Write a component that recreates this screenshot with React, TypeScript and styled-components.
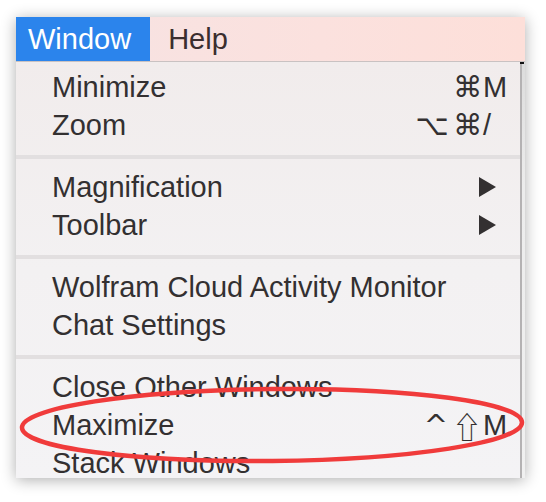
import React from "react";
import styled, { createGlobalStyle } from "styled-components";

const GlobalStyle = createGlobalStyle`
  html, body {
    margin: 0;
    padding: 0;
    background: #fff;
  }
  body {
    font-family: "Liberation Sans", Arial, sans-serif;
  }
`;

type Shortcut = { mods: string; key: string };
type Item = { label: string; shortcut?: Shortcut; submenu?: boolean };

const sections: Item[][] = [
  [
    { label: "Minimize", shortcut: { mods: "⌘", key: "M" } },
    { label: "Zoom", shortcut: { mods: "⌥⌘", key: "/" } },
  ],
  [
    { label: "Magnification", submenu: true },
    { label: "Toolbar", submenu: true },
  ],
  [{ label: "Wolfram Cloud Activity Monitor" }, { label: "Chat Settings" }],
  [
    { label: "Close Other Windows" },
    { label: "Maximize", shortcut: { mods: "^⇧", key: "M" } },
    { label: "Stack Windows" },
  ],
];

const Stage = styled.div`
  position: relative;
  width: 546px;
  height: 502px;
  padding: 17px 0 0 16px;
  box-sizing: border-box;
  overflow: hidden;
`;

const Frame = styled.div`
  width: 509px;
  height: 461px;
  overflow: hidden;
  display: flex;
  flex-direction: column;
  box-shadow: 0 2px 14px rgba(0, 0, 0, 0.32);
`;

const MenuBar = styled.div`
  height: 44px;
  display: flex;
  align-items: stretch;
  background: linear-gradient(90deg, #f6e3e3 0%, #fbe1de 60%, #fddfd9 100%);
  border-bottom: 1px solid #c9c2c2;
  flex-shrink: 0;
`;

const BarItem = styled.div<{ $active?: boolean }>`
  display: flex;
  align-items: center;
  font-size: 29px;
  padding: ${(p) => (p.$active ? "0 19px 0 12px" : "0 0 0 18px")};
  background: ${(p) => (p.$active ? "#2b84ec" : "transparent")};
  color: ${(p) => (p.$active ? "#fff" : "#3b2e2e")};
`;

const Body = styled.div`
  flex: 1;
  display: flex;
  min-height: 0;
`;

const Menu = styled.div`
  flex: 1;
  padding-top: 6px;
  background: linear-gradient(180deg, #f1ecec 0%, #f3f1f2 50%, #f4f3f5 100%);
`;

const Edge = styled.div`
  width: 3px;
  border-left: 2px solid #b4b2b3;
  background: linear-gradient(180deg, #dcdcdc 0%, #ececec 30%, #f0f0f0 100%);
  position: relative;
  &::before {
    content: "";
    position: absolute;
    left: -2px;
    top: 0;
    width: 4px;
    height: 2px;
    background: #111;
  }
`;

const Row = styled.div`
  height: 38px;
  display: flex;
  align-items: center;
  padding-left: 36px;
  font-size: 29px;
  color: #333031;
  white-space: nowrap;
`;

const Label = styled.span`
  flex: 1;
`;

const Mods = styled.span`
  display: flex;
  align-items: center;
  gap: 4px;
  padding-right: 1px;
`;

const Glyph = styled.span<{ $cjk?: boolean }>`
  font-family: ${(p) =>
    p.$cjk ? `"Noto Sans CJK JP", "DejaVu Sans", sans-serif` : `"DejaVu Sans", sans-serif`};
  font-size: ${(p) => (p.$cjk ? "30px" : "29px")};
`;

const Key = styled.span`
  width: 37px;
  text-align: left;
`;

const Arrow = styled.svg`
  width: 17px;
  height: 20px;
  margin-right: 24px;
`;

const Separator = styled.div`
  height: 4px;
  margin: 11px 0 9px;
  background: #e2dfe0;
`;

const Annotation = styled.svg`
  position: absolute;
  left: 0;
  top: 0;
  width: 546px;
  height: 502px;
  pointer-events: none;
`;

function MenuRow({ item }: { item: Item }) {
  return (
    <Row>
      <Label>{item.label}</Label>
      {item.shortcut && (
        <>
          <Mods>
            {Array.from(item.shortcut.mods).map((c, i) => (
              <Glyph key={i} $cjk={c === "⇧"}>
                {c}
              </Glyph>
            ))}
          </Mods>
          <Key>{item.shortcut.key}</Key>
        </>
      )}
      {item.submenu && (
        <Arrow viewBox="0 0 17 20">
          <polygon points="0,0 17,10 0,20" fill="#333031" />
        </Arrow>
      )}
    </Row>
  );
}

export default function App() {
  return (
    <>
      <GlobalStyle />
      <Stage>
        <Frame>
          <MenuBar>
            <BarItem $active>Window</BarItem>
            <BarItem>Help</BarItem>
          </MenuBar>
          <Body>
            <Menu>
              {sections.map((sec, i) => (
                <React.Fragment key={i}>
                  {i > 0 && <Separator />}
                  {sec.map((item) => (
                    <MenuRow key={item.label} item={item} />
                  ))}
                </React.Fragment>
              ))}
            </Menu>
            <Edge />
          </Body>
        </Frame>
        <Annotation viewBox="0 0 546 502">
          <ellipse
            cx="272"
            cy="425"
            rx="250"
            ry="36"
            transform="rotate(-0.6 272 425)"
            fill="none"
            stroke="#f03b3b"
            strokeWidth="4.5"
          />
        </Annotation>
      </Stage>
    </>
  );
}
